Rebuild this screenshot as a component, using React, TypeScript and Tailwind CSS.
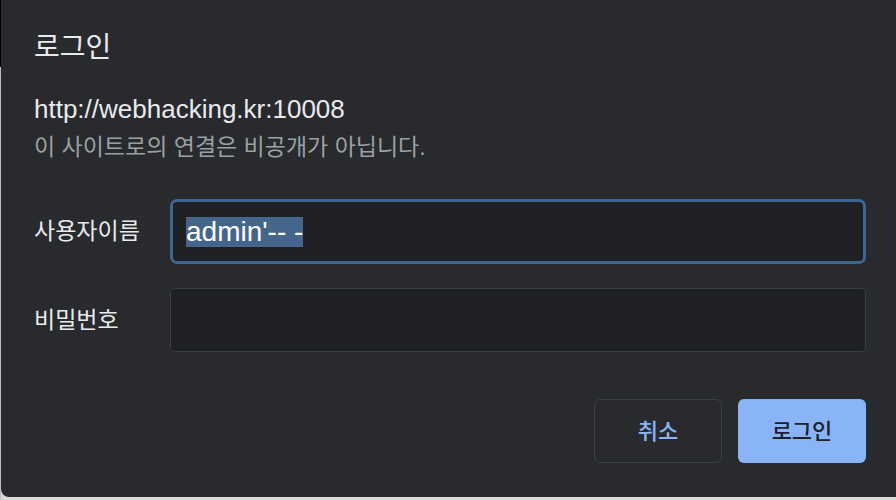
const hangul = "font-['Liberation_Sans','Noto_Sans_CJK_KR',sans-serif]";

export default function App() {
  return (
    <div className="flex h-[500px] w-[896px] bg-[#d9d9d9]">
      {/* window edge behind the dialog */}
      <div className="flex w-px flex-col">
        <div className="h-[67px] bg-black" />
        <div className="flex-1 bg-[#bdbdbd]" />
      </div>

      <div className={`h-[497px] flex-1 rounded-bl-[8px] bg-[#292a2d] pl-[33px] pr-[30px] pt-[30px] ${hangul}`}>
        <h1 className="h-[36px] text-[28px] leading-[36px] text-[#e8eaed]">로그인</h1>

        <div className="mt-[28px] text-[26px] leading-[30px] text-[#e8eaed]">http://webhacking.kr:10008</div>
        <div className="mt-[8px] text-[23px] leading-[30px] text-[#9aa0a6]">이 사이트로의 연결은 비공개가 아닙니다.</div>

        <div className="mt-[37px] flex items-center">
          <label className="w-[136px] text-[23px] text-[#e8eaed]">사용자이름</label>
          <div className="flex h-[65px] flex-1 items-center rounded-[7px] border-[3px] border-[#3b6791] bg-[#202124] pl-[13px]">
            <span className="bg-[#45668c] text-[28px] leading-[30px] text-white">admin'-- -</span>
          </div>
        </div>

        <div className="mt-[24px] flex items-center">
          <label className="w-[136px] text-[23px] text-[#e8eaed]">비밀번호</label>
          <div className="h-[64px] flex-1 rounded-[5px] border border-[#3c4043] bg-[#202124]" />
        </div>

        <div className="mt-[47px] flex justify-end gap-4">
          <button className="h-[64px] w-[128px] rounded-[6px] border border-[#3c4043] text-[22px] font-medium text-[#8ab4f8]">
            취소
          </button>
          <button className="h-[64px] w-[128px] rounded-[6px] bg-[#8ab4f8] text-[22px] font-medium text-[#202124]">
            로그인
          </button>
        </div>
      </div>
    </div>
  );
}
